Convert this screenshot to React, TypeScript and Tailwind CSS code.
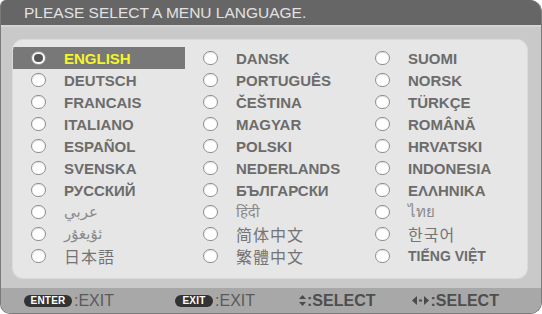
import React from "react";

type Item = { label: string; kind?: "latin" | "small" | "cjk" | "viet" };

const col1: Item[] = [
  { label: "ENGLISH" },
  { label: "DEUTSCH" },
  { label: "FRANCAIS" },
  { label: "ITALIANO" },
  { label: "ESPAÑOL" },
  { label: "SVENSKA" },
  { label: "РУССКИЙ" },
  { label: "عربي", kind: "small" },
  { label: "ئۇيغۇر", kind: "small" },
  { label: "日本語", kind: "cjk" },
];
const col2: Item[] = [
  { label: "DANSK" },
  { label: "PORTUGUÊS" },
  { label: "ČEŠTINA" },
  { label: "MAGYAR" },
  { label: "POLSKI" },
  { label: "NEDERLANDS" },
  { label: "БЪЛГАРСКИ" },
  { label: "हिंदी", kind: "small" },
  { label: "简体中文", kind: "cjk" },
  { label: "繁體中文", kind: "cjk" },
];
const col3: Item[] = [
  { label: "SUOMI" },
  { label: "NORSK" },
  { label: "TÜRKÇE" },
  { label: "ROMÂNĂ" },
  { label: "HRVATSKI" },
  { label: "INDONESIA" },
  { label: "ΕΛΛΗΝΙΚΑ" },
  { label: "ไทย", kind: "small" },
  { label: "한국어", kind: "cjk" },
  { label: "TIẾNG VIỆT", kind: "viet" },
];

function Radio({ selected }: { selected?: boolean }) {
  return (
    <div className="w-[15px] h-[14px] rounded-full bg-white border border-[#8e8e8e] flex items-center justify-center shadow-[inset_0_1px_1px_rgba(0,0,0,0.12)]">
      {selected && <div className="w-[9px] h-[8px] rounded-full bg-[#555]" />}
    </div>
  );
}

function Row({ item, selected }: { item: Item; selected?: boolean }) {
  const kind = item.kind ?? "latin";
  let textCls = "text-[15px] font-bold text-[#6c6c6c]";
  if (kind === "small") textCls = "text-[15px] font-normal text-[#8a8a8a] font-['DejaVu_Sans','Noto_Sans',sans-serif]";
  if (kind === "cjk") textCls = "text-[16px] font-normal text-[#747474] font-['Noto_Sans_CJK_JP','Noto_Sans_CJK_KR',sans-serif] tracking-[1px]";
  if (kind === "viet") textCls = "text-[14px] font-bold text-[#6c6c6c]";
  if (selected) textCls = "text-[15px] font-bold text-[#f5f52a]";
  return (
    <div className={`h-[22px] flex items-center ${selected ? "bg-[#787878]" : ""}`}>
      <div className="w-[51px] flex pl-[18px]">
        <Radio selected={selected} />
      </div>
      <span className={`leading-none whitespace-nowrap ${textCls}`}>{item.label}</span>
    </div>
  );
}

function Column({ items, first }: { items: Item[]; first?: boolean }) {
  return (
    <div className="flex flex-col">
      {items.map((it, i) => (
        <Row key={it.label} item={it} selected={first && i === 0} />
      ))}
    </div>
  );
}

function Pill({ text, w }: { text: string; w: string }) {
  return (
    <div
      className={`${w} h-[12px] rounded-full bg-[#333] text-white text-[10px] font-bold flex items-center justify-center leading-none tracking-[0.2px]`}
    >
      {text}
    </div>
  );
}

function UpDown() {
  return (
    <svg width="7" height="11" viewBox="0 0 7 11" className="mr-[1px]">
      <polygon points="3.5,0 7,4 0,4" fill="#4a4a4a" />
      <polygon points="0,7 7,7 3.5,11" fill="#4a4a4a" />
    </svg>
  );
}

function LeftRight() {
  return (
    <svg width="17" height="9" viewBox="0 0 17 9" className="mr-[1px]">
      <polygon points="0,4.5 5,0 5,9" fill="#4a4a4a" />
      <rect x="7" y="3.5" width="3" height="2" fill="#4a4a4a" />
      <polygon points="17,4.5 12,0 12,9" fill="#4a4a4a" />
    </svg>
  );
}

export default function App() {
  return (
    <div className="w-[542px] h-[314px] bg-white overflow-hidden font-['Liberation_Sans','Noto_Sans_CJK_JP',sans-serif]">
      <div className="w-full h-full flex flex-col overflow-hidden rounded-tl-[6px] rounded-tr-[12px] rounded-bl-[10px] rounded-br-[12px] border-l border-b border-r border-[#7a7a7a] bg-[#c9c9c9]">
        <div className="h-[25px] shrink-0 bg-[#666666] flex items-center pl-[23px] text-[15.5px] text-[#e2e2e2] leading-none">
          PLEASE SELECT A MENU LANGUAGE.
        </div>
        <div className="h-[263px] shrink-0 pt-[13px] pl-[12px] pr-[6px] border-t-[2px] border-[#d4d4d4]">
          <div className="w-[514px] h-[238px] rounded-[10px] bg-[#e6e6e6] pt-[7px] grid grid-cols-[172px_172px_1fr] overflow-hidden shadow-[0_0_0_1px_#dadada]">
            <Column items={col1} first />
            <Column items={col2} />
            <Column items={col3} />
          </div>
        </div>
        <div className="flex-1 bg-[#a8a8a8] flex items-center pl-[23px] text-[16px] leading-none">
          <div className="flex items-center">
            <Pill text="ENTER" w="w-[48px]" />
            <span className="text-[#5a5a5a] ml-[2px]">:EXIT</span>
          </div>
          <div className="flex items-center ml-[61px]">
            <Pill text="EXIT" w="w-[38px]" />
            <span className="text-[#5a5a5a] ml-[2px]">:EXIT</span>
          </div>
          <div className="flex items-center ml-[44px]">
            <UpDown />
            <span className="text-[#4e4e4e] font-bold">:SELECT</span>
          </div>
          <div className="flex items-center ml-[37px]">
            <LeftRight />
            <span className="text-[#4e4e4e] font-bold">:SELECT</span>
          </div>
        </div>
      </div>
    </div>
  );
}
